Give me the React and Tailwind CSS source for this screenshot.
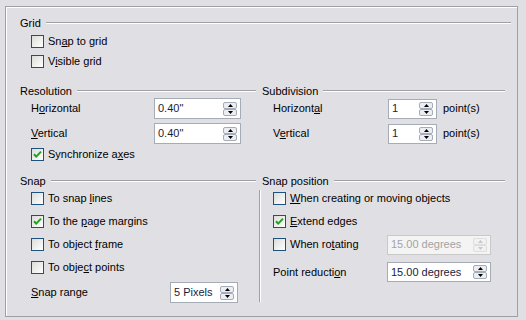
import React from 'react';

// Windows-classic style check box (13x13)
function Box({ checked }) {
  return (
    <span className="flex h-[13px] w-[13px] shrink-0 items-center justify-center border border-[#1c5180] bg-linear-to-br from-[#dcdcd7] to-white">
      {checked && (
        <svg width="11" height="11" viewBox="0 0 11 11">
          <path d="M2 5.2 L4.2 7.6 L9 2.6" stroke="#21a121" strokeWidth="2" fill="none" />
        </svg>
      )}
    </span>
  );
}

function Spin({ disabled }) {
  const fill = disabled ? '#c8c8c8' : '#000';
  const half = disabled
    ? 'flex h-[7px] items-center justify-center rounded-[2px] border border-[#dedede] bg-[#f2f2f2]'
    : 'flex h-[7px] items-center justify-center rounded-[2px] border border-[#a4acb9] bg-[#eceef2]';
  return (
    <span className="mr-[3px] flex h-[14px] w-[14px] shrink-0 flex-col">
      <span className={half}>
        <svg width="5" height="3" viewBox="0 0 5 3">
          <path d="M0 3 L2.5 0 L5 3Z" fill={fill} />
        </svg>
      </span>
      <span className={half}>
        <svg width="5" height="3" viewBox="0 0 5 3">
          <path d="M0 0 L2.5 3 L5 0Z" fill={fill} />
        </svg>
      </span>
    </span>
  );
}

function Field({ value, className, disabled }) {
  return (
    <div
      className={
        'flex items-center border ' +
        (disabled ? 'border-[#c9c9c9] bg-[#f4f4f4] text-[#a3a3a3] ' : 'border-[#a5acb5] bg-white text-[#1b1b3a] ') +
        className
      }
    >
      <span className="flex-1 pl-[3px] whitespace-nowrap">{value}</span>
      <Spin disabled={disabled} />
    </div>
  );
}

function Header({ children, className = '' }) {
  return (
    <div className={'flex h-[14px] items-center ' + className}>
      <span className="whitespace-nowrap">{children}</span>
      <div className="ml-[5px] h-0 flex-1 border-t border-b border-t-[#a0a0a0] border-b-white" />
    </div>
  );
}

function Check({ checked, children, className = 'h-[23px]' }) {
  return (
    <div className={'flex items-center ' + className}>
      <Box checked={checked} />
      <span className="ml-[4px] whitespace-nowrap">{children}</span>
    </div>
  );
}

export default function App() {
  return (
    <div className="h-[320px] w-[526px] overflow-hidden bg-[#e0dfe3] pt-[6px] pl-[5px] font-['Liberation_Sans',Arial,sans-serif] text-[11px] leading-[13px] text-black">
      <div className="h-[311px] w-[513px] border border-[#a0a0a0] pt-[9px] pr-[6px] pl-[14px] shadow-[inset_1px_1px_0_#ffffff]">
        {/* Grid */}
        <Header>Grid</Header>
        <div className="mt-[1px] pl-[11px]">
          <Check className="h-[20px]">
            Sn<u>a</u>p to grid
          </Check>
          <Check className="h-[20px]">
            V<u>i</u>sible grid
          </Check>
        </div>

        {/* Resolution / Subdivision */}
        <div className="mt-[13px] mr-[6px] grid grid-cols-[236px_1fr] gap-x-[3px]">
          <div>
            <Header>Resolution</Header>
            <div className="pl-[11px]">
              <div className="flex h-[21px] items-center">
                <span className="w-[123px]">
                  H<u>o</u>rizontal
                </span>
                <Field value={'0.40"'} className="h-[21px] w-[87px]" />
              </div>
              <div className="mt-[4px] flex h-[21px] items-center">
                <span className="w-[123px]">
                  <u>V</u>ertical
                </span>
                <Field value={'0.40"'} className="h-[21px] w-[87px]" />
              </div>
              <Check checked className="h-[20px]">
                Synchronize a<u>x</u>es
              </Check>
            </div>
          </div>
          <div>
            <Header className="pl-[3px]">Subdivision</Header>
            <div className="pl-[14px]">
              <div className="flex h-[21px] items-center">
                <span className="w-[115px]">
                  Horizont<u>a</u>l
                </span>
                <Field value="1" className="h-[20px] w-[49px]" />
                <span className="ml-[6px]">point(s)</span>
              </div>
              <div className="mt-[4px] flex h-[21px] items-center">
                <span className="w-[115px]">
                  V<u>e</u>rtical
                </span>
                <Field value="1" className="h-[20px] w-[49px]" />
                <span className="ml-[6px]">point(s)</span>
              </div>
            </div>
          </div>
        </div>

        {/* Snap / Snap position */}
        <div className="mt-[10px] mr-[6px] grid grid-cols-[236px_1fr] gap-x-[3px]">
          <div>
            <Header>Snap</Header>
            <div className="-mt-[1px] pl-[11px]">
              <Check>
                To snap <u>l</u>ines
              </Check>
              <Check checked>
                To the <u>p</u>age margins
              </Check>
              <Check>
                To object <u>f</u>rame
              </Check>
              <Check>
                To obje<u>c</u>t points
              </Check>
              <div className="mt-[3px] flex h-[21px] items-center">
                <span className="w-[139px]">
                  <u>S</u>nap range
                </span>
                <Field value="5 Pixels" className="h-[21px] w-[68px]" />
              </div>
            </div>
          </div>
          <div>
            <Header className="pl-[3px]">Snap position</Header>
            <div className="flex items-start">
              <div className="mt-[2px] h-[112px] w-[2px] border-l border-r border-l-[#a0a0a0] border-r-white" />
              <div className="-mt-[1px] flex-1 pl-[12px]">
                <Check>
                  <u>W</u>hen creating or moving objects
                </Check>
                <Check checked>
                  <u>E</u>xtend edges
                </Check>
                <div className="flex h-[23px] items-center">
                  <div className="flex w-[114px] items-center">
                    <Box />
                    <span className="ml-[4px] whitespace-nowrap">
                      When ro<u>t</u>ating
                    </span>
                  </div>
                  <Field disabled value="15.00 degrees" className="h-[20px] w-[104px]" />
                </div>
                <div className="mt-[6px] flex h-[20px] items-center">
                  <span className="w-[114px]">
                    Point reducti<u>o</u>n
                  </span>
                  <Field value="15.00 degrees" className="h-[20px] w-[104px]" />
                </div>
              </div>
            </div>
          </div>
        </div>
      </div>
    </div>
  );
}
